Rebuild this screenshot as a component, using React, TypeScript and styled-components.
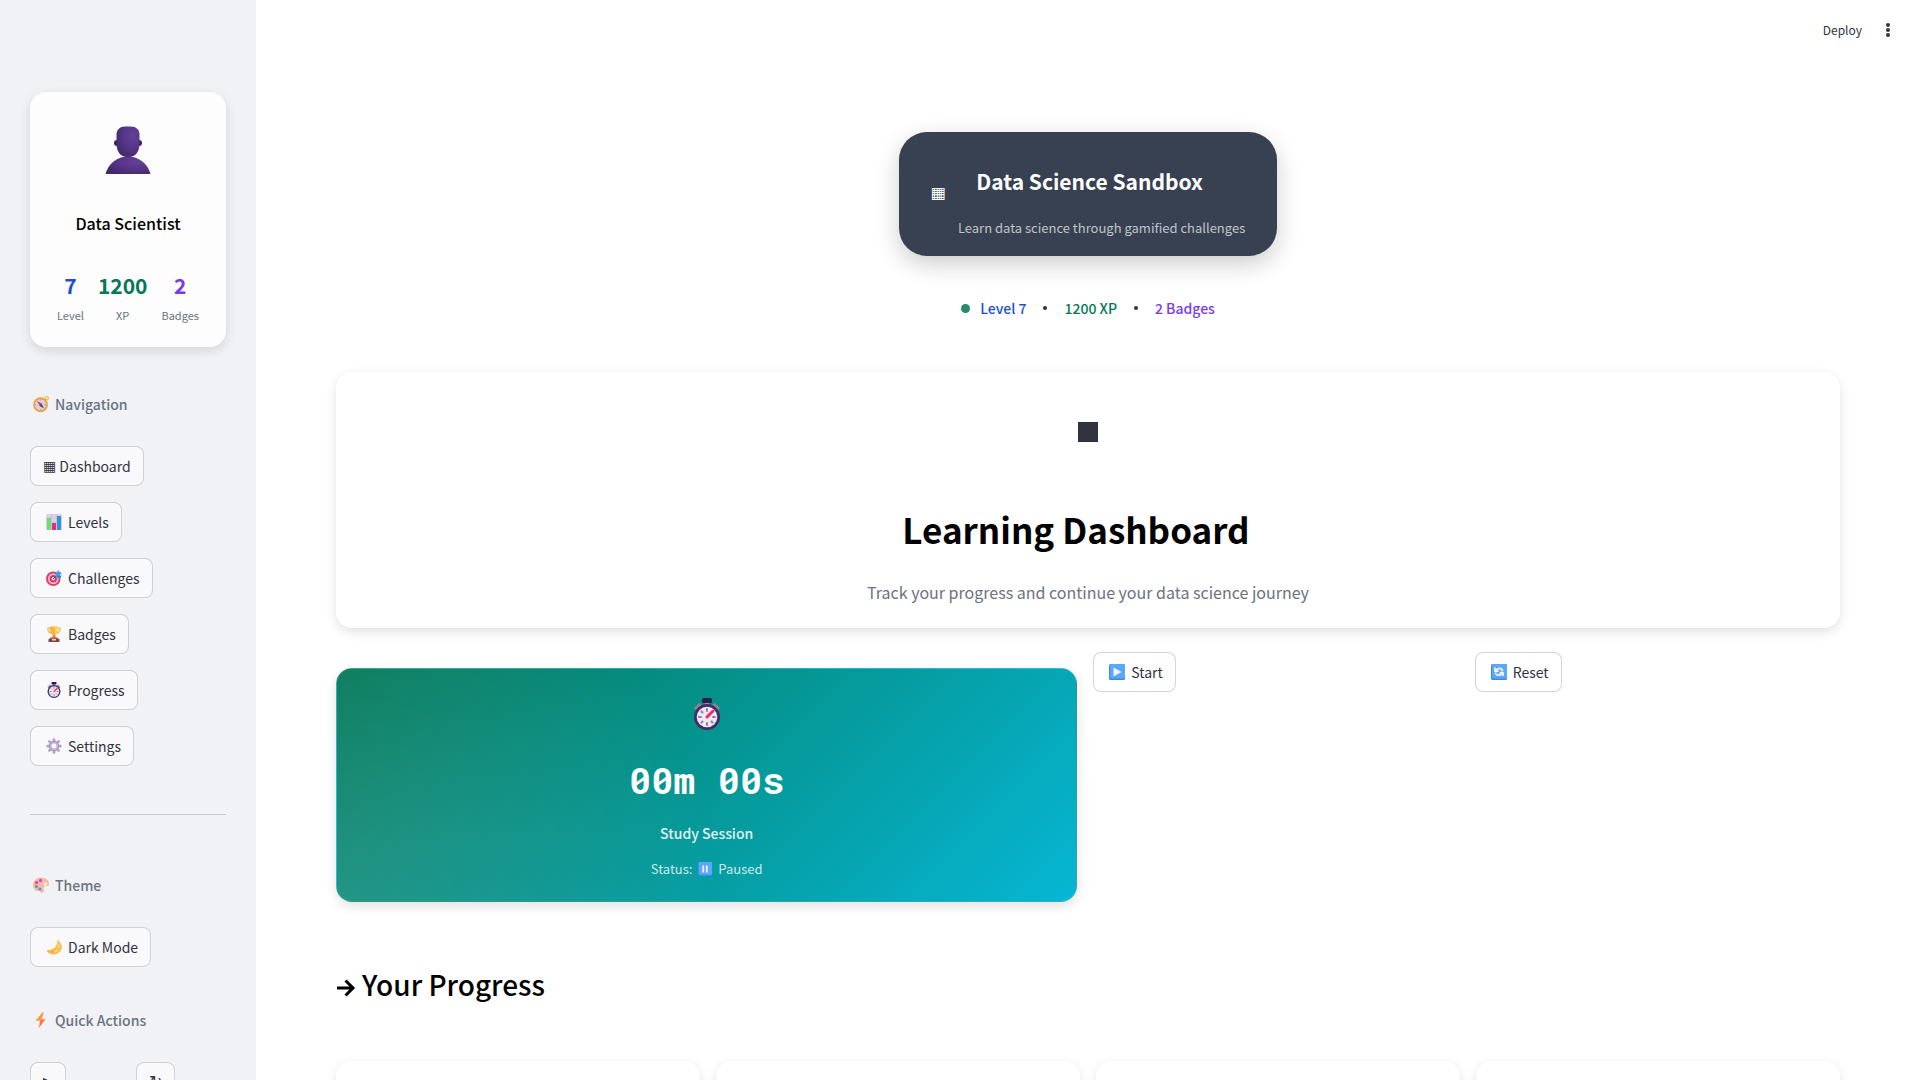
import React from "react";
import styled, { createGlobalStyle } from "styled-components";

const sans = `"Noto Sans CJK SC", "Noto Sans", sans-serif`;
const mono = `"Roboto Mono", "DejaVu Sans Mono", monospace`;
const symbols = `"DejaVu Sans", sans-serif`;

const GlobalStyle = createGlobalStyle`
  *, *::before, *::after { box-sizing: border-box; }
  body { margin: 0; background: #ffffff; color: #31333f; font: 400 14px/24px ${sans}; }
  h1, h2, h3, p { margin: 0; }
  button { font: inherit; color: inherit; cursor: pointer; }
`;

/* ---------- layout ---------- */

const Page = styled.div`
  display: flex;
  height: 100vh;
  overflow: hidden;
`;

const Sidebar = styled.aside`
  flex: 0 0 256px;
  padding: 92px 30px 32px;
  background: #f0f2f6;
  overflow-y: auto;
  scrollbar-width: none;
`;

const Main = styled.main`
  flex: 1;
  min-width: 0;
  overflow-y: auto;
  scrollbar-width: none;
`;

const TopBar = styled.header`
  display: flex;
  align-items: center;
  justify-content: flex-end;
  gap: 10px;
  height: 60px;
  padding-right: 20px;
`;

const DeployButton = styled.button`
  padding: 0 4px;
  border: 0;
  background: none;
  font-size: 12px;
  line-height: 24px;
`;

const MenuButton = styled.button`
  display: flex;
  padding: 0;
  border: 0;
  background: none;
`;

const Content = styled.div`
  padding: 72px 80px 40px;
`;

/* ---------- shared controls ---------- */

const Icon = styled.svg<{ $size: number }>`
  flex: none;
  width: ${(p) => p.$size}px;
  height: ${(p) => p.$size}px;
  margin: 0 6px 0 3px;
`;

const Button = styled.button<{ $surface?: string }>`
  display: inline-flex;
  align-items: center;
  height: 40px;
  padding: 0 12px;
  border: 1px solid rgba(49, 51, 63, 0.2);
  border-radius: 8px;
  background: ${(p) => p.$surface ?? "#ffffff"};
  white-space: pre;
`;

const Symbol = styled.span<{ $size: number }>`
  font-family: ${symbols};
  font-size: ${(p) => p.$size}px;
`;

/* ---------- sidebar ---------- */

const ProfileCard = styled.section`
  display: flex;
  flex-direction: column;
  align-items: center;
  margin-bottom: 45px;
  padding: 24px 0;
  border-radius: 16px;
  background: #fdfdfe;
  box-shadow: 0 4px 12px rgba(0, 0, 0, 0.12);
`;

const Avatar = styled.svg`
  width: 48px;
  height: 48px;
  margin: 10px 0 37px;
`;

const ProfileName = styled.h3`
  margin-bottom: 36px;
  color: #000000;
  font-size: 16px;
  font-weight: 500;
  line-height: 24px;
`;

const Stats = styled.div`
  display: flex;
  gap: 14px;
`;

const Stat = styled.div`
  display: flex;
  flex-direction: column;
  align-items: center;
  gap: 8px;
`;

const StatValue = styled.strong<{ $color: string }>`
  color: ${(p) => p.$color};
  font-size: 21px;
  font-weight: 700;
  line-height: 28px;
`;

const StatLabel = styled.span`
  color: #6b7280;
  font-size: 11px;
  line-height: 16px;
`;

const SectionLabel = styled.h3`
  display: flex;
  align-items: center;
  margin-bottom: 30px;
  color: #6b7280;
  font-size: 14px;
  font-weight: 500;
  line-height: 24px;
`;

const NavList = styled.nav`
  display: flex;
  flex-direction: column;
  align-items: flex-start;
  gap: 16px;
`;

const Divider = styled.hr`
  height: 1px;
  margin: 48px 0 58px;
  border: 0;
  background: rgba(49, 51, 63, 0.2);
`;

const ThemeSection = styled.section`
  margin-bottom: 41px;
`;

const ActionGrid = styled.div`
  display: grid;
  grid-template-columns: 1fr 1fr;
  gap: 16px;
  justify-items: start;
`;

/* ---------- hero ---------- */

const Hero = styled.section`
  display: flex;
  flex-direction: column;
  align-items: center;
  gap: 40px;
  margin-bottom: 52px;
`;

const Banner = styled.div`
  display: flex;
  align-items: center;
  gap: 12px;
  padding: 20px 32px 18px;
  border-radius: 28px;
  background: #374151;
  color: #ffffff;
  box-shadow: 0 8px 24px rgba(0, 0, 0, 0.2);
`;

const BannerIcon = styled(Symbol)`
  padding-bottom: 5px;
`;

const BannerText = styled.div`
  text-align: center;
`;

const BannerTitle = styled.h1`
  padding: 13px 24px 21px 0;
  font-size: 21px;
  font-weight: 700;
  line-height: 32px;
`;

const BannerSubtitle = styled.p`
  color: rgba(255, 255, 255, 0.7);
  font-size: 13px;
  line-height: 20px;
`;

const Summary = styled.div`
  display: flex;
  align-items: center;
  gap: 17px;
  font-weight: 500;
`;

const SummaryItem = styled.span<{ $color: string }>`
  display: flex;
  align-items: center;
  gap: 10px;
  color: ${(p) => p.$color};
`;

const Dot = styled.i<{ $size: number; $color: string }>`
  width: ${(p) => p.$size}px;
  height: ${(p) => p.$size}px;
  border-radius: 50%;
  background: ${(p) => p.$color};
`;

/* ---------- dashboard ---------- */

const Card = styled.section`
  border-radius: 16px;
  background: #ffffff;
  box-shadow: 0 4px 12px rgba(0, 0, 0, 0.12);
`;

const DashboardCard = styled(Card)`
  display: flex;
  flex-direction: column;
  align-items: center;
  margin-bottom: 24px;
  padding: 32px 24px 24px;
`;

const Square = styled.i`
  width: 20px;
  height: 20px;
  margin: 18px 0 66px;
  background: #31333f;
`;

const DashboardTitle = styled.h1`
  padding: 0 24px 30px 0;
  color: #000000;
  font-size: 35px;
  font-weight: 700;
  line-height: 42px;
`;

const DashboardText = styled.p`
  color: #6b7280;
  font-size: 16px;
  line-height: 24px;
`;

const TimerRow = styled.div`
  display: flex;
  align-items: flex-start;
  gap: 16px;
  margin-bottom: 62px;
`;

const Column = styled.div<{ $share: number }>`
  flex: 1 1 calc(${(p) => p.$share}% - 16px);
`;

const TimerCard = styled.section`
  display: flex;
  flex-direction: column;
  align-items: center;
  margin-top: 16px;
  padding: 24px 24px 22px;
  border: 1px solid rgba(255, 255, 255, 0.15);
  border-radius: 16px;
  background:
    radial-gradient(circle at 0% 100%, rgba(255, 255, 255, 0.12), transparent 50%),
    linear-gradient(135deg, #047857, #06b6d4);
  color: #ffffff;
  box-shadow: 0 4px 12px rgba(0, 0, 0, 0.12);
`;

const Stopwatch = styled.svg`
  width: 32px;
  height: 32px;
  margin: 5px 0 26px;
`;

const Clock = styled.time`
  font: 700 37px/48px ${mono};
  white-space: pre;
`;

const TimerLabel = styled.p`
  margin: 17px 0 14px;
  color: rgba(255, 255, 255, 0.9);
  font-weight: 500;
`;

const TimerStatus = styled.p`
  display: flex;
  align-items: center;
  color: rgba(255, 255, 255, 0.8);
  font-size: 13px;
  line-height: 20px;
  white-space: pre;
`;

const ProgressHeading = styled.h2`
  display: flex;
  align-items: center;
  gap: 6px;
  margin-bottom: 57px;
  color: #000000;
  font-size: 28px;
  font-weight: 500;
  line-height: 40px;
`;

const Arrow = styled.svg`
  width: 20px;
  height: 28px;
`;

const ProgressGrid = styled.div`
  display: grid;
  grid-template-columns: repeat(4, 1fr);
  gap: 16px;
`;

const ProgressCard = styled(Card)`
  min-height: 160px;
`;

/* ---------- drawings ---------- */

type IconName =
  | "compass" | "chart" | "target" | "trophy" | "stopwatch" | "gear"
  | "palette" | "moon" | "bolt" | "play" | "reload" | "pause";

const stopwatch = (
  <>
    <path d="M3 10 8 5l3 2-5 6ZM29 10l-5-5-3 2 5 6Z" fill="#8d8594" />
    <path d="M14 3h4v5h-4z" fill="#998ea4" />
    <rect x="11" y="0" width="10" height="5" rx="1.500" fill="#321b52" />
    <circle cx="16" cy="19" r="13" fill="#472b68" />
    <circle cx="16" cy="19" r="10.300" fill="#eee8f3" />
    <path d="M16 11v2M16 25v2M8 19h2M22 19h2M10.500 13.500l1 1M20.500 23.500l1 1M10.500 24.500l1-1" stroke="#8d7f9b" strokeWidth="2" strokeLinecap="round" />
    <path d="M16 19 22 13" stroke="#ef2d66" strokeWidth="3" strokeLinecap="round" />
  </>
);

const tile = (
  <>
    <rect x="0" y="0" width="32" height="32" rx="3" fill="#3c8ae6" />
    <rect x="2" y="0" width="30" height="29" rx="2.500" fill="#59a8fa" />
  </>
);

const drawings: Record<IconName, React.ReactNode> = {
  compass: (
    <>
      <circle cx="27.500" cy="4.500" r="3.200" fill="none" stroke="#f6b93f" strokeWidth="2.400" />
      <circle cx="15" cy="17.500" r="13" fill="#d9cfe1" stroke="#eda13d" strokeWidth="3.600" />
      <path d="m8 10 10 5.500-4.500 4Z" fill="#e5275d" />
      <path d="m22 25-9.500-5.500 5-4Z" fill="#514760" />
      <path d="M15 6.500v2M15 26.500v2M4.500 17.500h2M23.500 17.500h2" stroke="#978ba3" strokeWidth="1.500" />
    </>
  ),
  chart: (
    <>
      <rect x="0" y="0" width="32" height="32" rx="3" fill="#d9d3e4" />
      <path d="M0 8h32M0 16h32M0 24h32M11 0v32M21 0v32" stroke="#bdb4cc" strokeWidth="1" />
      <path d="M2 8h8v24H2z" fill="#70dc75" />
      <path d="M12 18h8v14h-8z" fill="#e52d70" />
      <path d="M22 4h8v28h-8z" fill="#3290e2" />
    </>
  ),
  target: (
    <>
      <circle cx="14.500" cy="17.500" r="14.500" fill="#e23e6b" />
      <circle cx="14.500" cy="17.500" r="10.500" fill="#e9d4e6" />
      <circle cx="14.500" cy="17.500" r="7.500" fill="#dd345f" />
      <circle cx="14.500" cy="17.500" r="3.500" fill="#f0dcea" />
      <path d="M14 18 25 7" stroke="#255c9c" strokeWidth="2" />
      <path d="m19 8 6-8 2 4 5 2-8 7-5-.5Z" fill="#36a3ef" />
      <path d="m22 12 10-1-4 5-7-1Z" fill="#2c84cd" />
    </>
  ),
  trophy: (
    <>
      <path d="M9 4H4v3c0 5 3 7 7 7M23 4h5v3c0 5-3 7-7 7" fill="none" stroke="#efb647" strokeWidth="2.500" />
      <path d="M14 16h4l2 9h-8Z" fill="#e68b34" />
      <path d="M8 1h16v7c0 6-3 10-8 10S8 14 8 8Z" fill="#f9b43a" />
      <path d="M17 1h7v7c0 5-2 8-5 9Z" fill="#ffd469" />
      <path d="M8 23h16l1 4H7Z" fill="#a85b66" />
      <path d="M5 26h22v6H5z" fill="#7d4055" />
      <path d="M12 26h8v3h-8z" fill="#ffd26a" />
    </>
  ),
  stopwatch,
  gear: (
    <>
      <g stroke="#b6a5ca" strokeWidth="5.500" strokeLinecap="round">
        <path d="M16 3v26M3 16h26M6.800 6.800l18.400 18.400M25.200 6.800 6.800 25.200" />
      </g>
      <circle cx="16" cy="16" r="9.500" fill="#c5b8d3" stroke="#a18db7" strokeWidth="2" />
      <circle cx="16" cy="16" r="4.800" fill="#f9f9fb" />
    </>
  ),
  palette: (
    <>
      <path d="M16 1C7 1 0 8 0 17s7 11 10 11c3-1 5 0 5 3 4 2 7 0 7-4 0-3-3-6 1-8 4-1 9 1 9-6C32 6 25 1 16 1Z" fill="#ffb7a5" />
      <circle cx="25" cy="14" r="3.500" fill="#f0f2f6" />
      <circle cx="15" cy="7" r="3.300" fill="#bf53ef" />
      <circle cx="7" cy="11" r="3.200" fill="#e43d9a" />
      <circle cx="7" cy="19" r="3.200" fill="#36b2a5" />
      <circle cx="14" cy="24" r="3.200" fill="#3d97ed" />
    </>
  ),
  moon: (
    <>
      <path d="M23 1c8 7 12 17 5 24-7 8-20 8-26 0-1-2 0-3 2-3 12 0 19-7 19-21Z" fill="#fcb94a" />
      <path d="M24 5c5 7 6 13 1 18-5 5-11 6-16 4 10-2 16-9 15-22Z" fill="#ffd477" />
      <circle cx="13" cy="26" r="1.800" fill="#e99a39" />
      <circle cx="24" cy="20" r="1.800" fill="#f0b04a" />
    </>
  ),
  bolt: (
    <>
      <path d="M19 1 6 17h8l-2 15 13-18h-8l4-12Z" fill="#ff6f4d" />
      <path d="M19 1 6 17h15l4-3h-8l4-12Z" fill="#ff9a42" />
    </>
  ),
  play: (
    <>
      {tile}
      <path d="m9 7 16 9L9 25Z" fill="#f8f0ff" />
    </>
  ),
  reload: (
    <>
      {tile}
      <path d="M8 7v7h7M24 24v-7h-7" fill="none" stroke="#f8f0ff" strokeWidth="3.500" />
      <path d="M10 13c3-6 12-6 13 1M22 18c-3 6-12 6-13-1" fill="none" stroke="#f8f0ff" strokeWidth="3.500" />
    </>
  ),
  pause: (
    <>
      {tile}
      <path d="M10 8h4v16h-4zM18 8h4v16h-4z" fill="#f8f0ff" />
    </>
  ),
};

const Glyph = ({ name, size = 16 }: { name: IconName; size?: number }) => (
  <Icon viewBox="0 0 32 32" $size={size} aria-hidden="true">{drawings[name]}</Icon>
);

const Person = () => (
  <Avatar viewBox="0 0 48 48" aria-hidden="true">
    <defs>
      <radialGradient id="skin" cx="0.7" cy="0.3" r="0.8">
        <stop offset="0" stopColor="#65419a" />
        <stop offset="0.5" stopColor="#56358a" />
        <stop offset="1" stopColor="#432867" />
      </radialGradient>
    </defs>
    <circle cx="13" cy="17" r="3" fill="#392058" />
    <circle cx="35" cy="17" r="3" fill="#392058" />
    <path d="M1.500 48C4 38 13 30.500 24 30.500S44 38 46.500 48Z" fill="url(#skin)" />
    <path d="M21 .5h6c5 0 8.500 3 8.500 8V17c0 8-3 14-11.500 14S12.500 25 12.500 17V8.500c0-5 3.500-8 8.500-8Z" fill="url(#skin)" />
  </Avatar>
);

/* ---------- page ---------- */

const stats = [
  { value: "7", label: "Level", color: "#1d4ed8" },
  { value: "1200", label: "XP", color: "#047857" },
  { value: "2", label: "Badges", color: "#7c3aed" },
];

const links: { label: string; icon: IconName }[] = [
  { label: "Levels", icon: "chart" },
  { label: "Challenges", icon: "target" },
  { label: "Badges", icon: "trophy" },
  { label: "Progress", icon: "stopwatch" },
  { label: "Settings", icon: "gear" },
];

export default function App() {
  return (
    <Page>
      <GlobalStyle />
      <Sidebar>
        <ProfileCard>
          <Person />
          <ProfileName>Data Scientist</ProfileName>
          <Stats>
            {stats.map((s) => (
              <Stat key={s.label}>
                <StatValue $color={s.color}>{s.value}</StatValue>
                <StatLabel>{s.label}</StatLabel>
              </Stat>
            ))}
          </Stats>
        </ProfileCard>

        <SectionLabel><Glyph name="compass" />Navigation</SectionLabel>
        <NavList>
          <Button $surface="#f9f9fb"><Symbol $size={14}>▦</Symbol> Dashboard</Button>
          {links.map((l) => (
            <Button key={l.label} $surface="#f9f9fb"><Glyph name={l.icon} />{l.label}</Button>
          ))}
        </NavList>

        <Divider />

        <ThemeSection>
          <SectionLabel><Glyph name="palette" />Theme</SectionLabel>
          <Button $surface="#f9f9fb"><Glyph name="moon" />Dark Mode</Button>
        </ThemeSection>

        <SectionLabel><Glyph name="bolt" />Quick Actions</SectionLabel>
        <ActionGrid>
          <Button $surface="#f9f9fb" aria-label="Start session"><Symbol $size={13}>▶</Symbol></Button>
          <Button $surface="#f9f9fb" aria-label="Refresh"><Symbol $size={16}>↻</Symbol></Button>
        </ActionGrid>
      </Sidebar>

      <Main>
        <TopBar>
          <DeployButton>Deploy</DeployButton>
          <MenuButton aria-label="Main menu">
            <svg width="24" height="24" viewBox="0 0 24 24" fill="#31333f" aria-hidden="true">
              <circle cx="12" cy="7" r="2" />
              <circle cx="12" cy="12" r="2" />
              <circle cx="12" cy="17" r="2" />
            </svg>
          </MenuButton>
        </TopBar>

        <Content>
          <Hero>
            <Banner>
              <BannerIcon $size={16} aria-hidden="true">▦</BannerIcon>
              <BannerText>
                <BannerTitle>Data Science Sandbox</BannerTitle>
                <BannerSubtitle>Learn data science through gamified challenges</BannerSubtitle>
              </BannerText>
            </Banner>
            <Summary>
              <SummaryItem $color="#1d4ed8"><Dot $size={9} $color="#25896b" />Level 7</SummaryItem>
              <Dot $size={4} $color="#31333f" />
              <SummaryItem $color="#047857">1200 XP</SummaryItem>
              <Dot $size={4} $color="#31333f" />
              <SummaryItem $color="#7c3aed">2 Badges</SummaryItem>
            </Summary>
          </Hero>

          <DashboardCard>
            <Square />
            <DashboardTitle>Learning Dashboard</DashboardTitle>
            <DashboardText>Track your progress and continue your data science journey</DashboardText>
          </DashboardCard>

          <TimerRow>
            <Column $share={50}>
              <TimerCard>
                <Stopwatch viewBox="0 0 32 32" aria-hidden="true">{stopwatch}</Stopwatch>
                <Clock>00m 00s</Clock>
                <TimerLabel>Study Session</TimerLabel>
                <TimerStatus>Status: <Glyph name="pause" size={14} />Paused</TimerStatus>
              </TimerCard>
            </Column>
            <Column $share={25}>
              <Button><Glyph name="play" />Start</Button>
            </Column>
            <Column $share={25}>
              <Button><Glyph name="reload" />Reset</Button>
            </Column>
          </TimerRow>

          <ProgressHeading>
            <Arrow viewBox="0 0 20 28" fill="none" stroke="#000000" strokeWidth="3" aria-hidden="true">
              <path d="M1 18h16M9.500 10.500 17 18l-7.500 7.500" />
            </Arrow>
            Your Progress
          </ProgressHeading>
          <ProgressGrid>
            <ProgressCard />
            <ProgressCard />
            <ProgressCard />
            <ProgressCard />
          </ProgressGrid>
        </Content>
      </Main>
    </Page>
  );
}
